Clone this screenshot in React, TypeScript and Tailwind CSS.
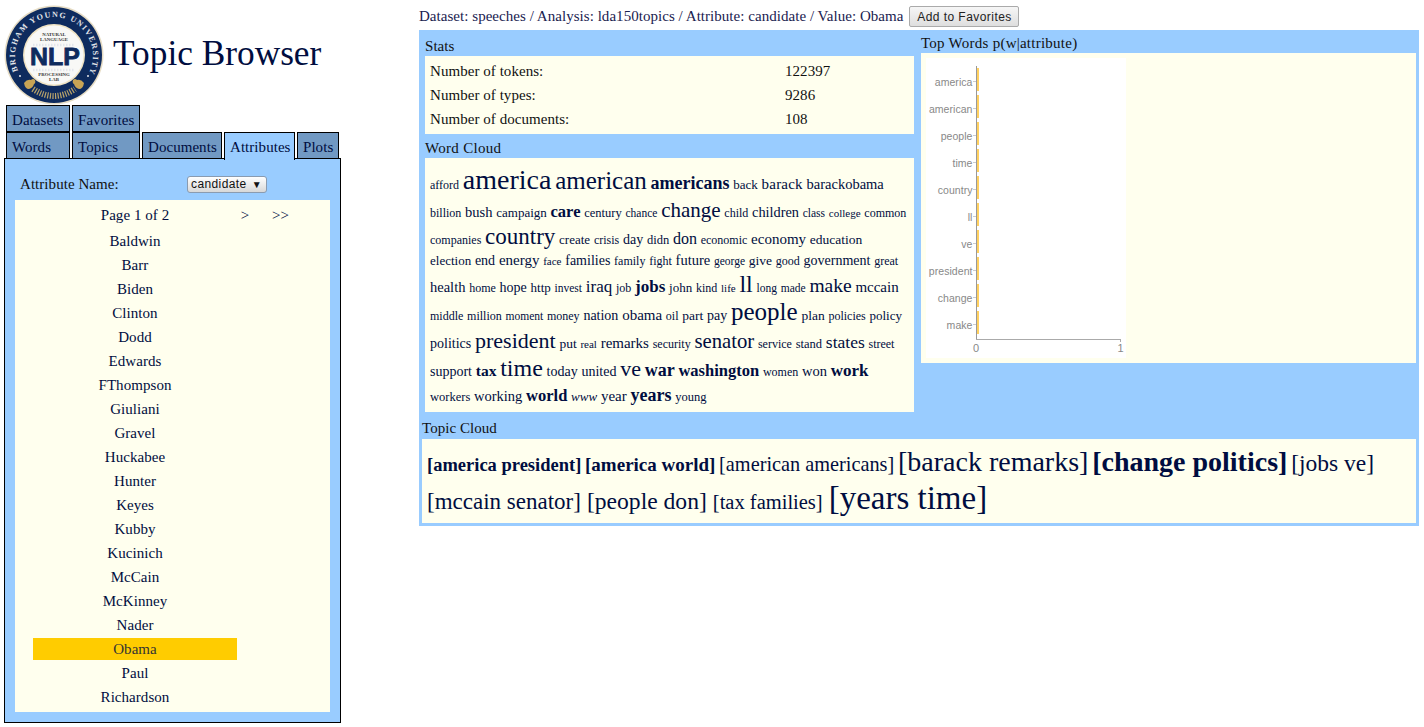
import React from "react";

type Item = [string, string];
const CLOUD: { h: string; words: Item[] }[] = [
  { h: "h-[30px]", words: [["afford","text-[12px]"],["america","text-[28px]"],["american","text-[25px]"],["americans","text-[18px] font-bold"],["back","text-[13px]"],["barack","text-[15px] tracking-[0.2px]"],["barackobama","text-[14.5px]"]] },
  { h: "h-[27px]", words: [["billion","text-[12px]"],["bush","text-[14.5px]"],["campaign","text-[13px]"],["care","text-[16.5px] font-bold"],["century","text-[12.5px]"],["chance","text-[11.5px]"],["change","text-[21px]"],["child","text-[12px]"],["children","text-[14.3px]"],["class","text-[11.5px]"],["college","text-[11px]"],["common","text-[12px]"]] },
  { h: "h-[23px]", words: [["companies","text-[12px]"],["country","text-[23px]"],["create","text-[13px]"],["crisis","text-[12px]"],["day","text-[14px]"],["didn","text-[12.5px]"],["don","text-[16px]"],["economic","text-[12px]"],["economy","text-[15px]"],["education","text-[13.5px]"]] },
  { h: "h-[24px]", words: [["election","text-[13px]"],["end","text-[14px]"],["energy","text-[15px]"],["face","text-[11px]"],["families","text-[14px]"],["family","text-[12px]"],["fight","text-[12px]"],["future","text-[14.5px]"],["george","text-[11.5px]"],["give","text-[13.5px]"],["good","text-[12px]"],["government","text-[14px]"],["great","text-[12px]"]] },
  { h: "h-[28px]", words: [["health","text-[14.5px]"],["home","text-[12px]"],["hope","text-[14px]"],["http","text-[13px]"],["invest","text-[11.5px]"],["iraq","text-[17px]"],["job","text-[12px]"],["jobs","text-[17px] font-bold"],["john","text-[13px]"],["kind","text-[12px]"],["life","text-[11px]"],["ll","text-[24px]"],["long","text-[11.5px]"],["made","text-[11.5px]"],["make","text-[19.5px]"],["mccain","text-[15px]"]] },
  { h: "h-[29px]", words: [["middle","text-[12px]"],["million","text-[12px]"],["moment","text-[11.5px]"],["money","text-[12px]"],["nation","text-[14px]"],["obama","text-[15px]"],["oil","text-[12px]"],["part","text-[13.5px]"],["pay","text-[14px]"],["people","text-[25px]"],["plan","text-[13.5px]"],["policies","text-[12px]"],["policy","text-[13px]"]] },
  { h: "h-[27px]", words: [["politics","text-[14px]"],["president","text-[22px]"],["put","text-[13.5px]"],["real","text-[11px]"],["remarks","text-[15px]"],["security","text-[12px]"],["senator","text-[20.7px]"],["service","text-[12px]"],["stand","text-[12.5px]"],["states","text-[17.5px]"],["street","text-[12px]"]] },
  { h: "h-[27px]", words: [["support","text-[14px]"],["tax","text-[15.5px] font-bold"],["time","text-[24px]"],["today","text-[14px]"],["united","text-[14px]"],["ve","text-[22px]"],["war","text-[18px] font-bold"],["washington","text-[16.5px] font-bold"],["women","text-[12px]"],["won","text-[14.5px]"],["work","text-[17px] font-bold"]] },
  { h: "h-[22px]", words: [["workers","text-[12.5px]"],["working","text-[14.5px]"],["world","text-[16.5px] font-bold"],["www","text-[13px] italic"],["year","text-[15px]"],["years","text-[18px] font-bold"],["young","text-[12.5px]"]] },
];
const TOPICS: { h: string; words: Item[] }[] = [
  { h: "h-[36px]", words: [["[america president]","text-[18.5px] font-bold"],["[america world]","text-[19px] font-bold"],["[american americans]","text-[20.3px]"],["[barack remarks]","text-[28px]"],["[change politics]","text-[28px] font-bold"],["[jobs ve]","text-[23.5px]"]] },
  { h: "h-[38px] text-[24px]", words: [["[mccain senator]","text-[23px]"],["[people don]","text-[23.6px]"],["[tax families]","text-[20.5px]"],["[years time]","text-[33px]"]] },
];
const names = ["Baldwin","Barr","Biden","Clinton","Dodd","Edwards","FThompson","Giuliani","Gravel","Huckabee","Hunter","Keyes","Kubby","Kucinich","McCain","McKinney","Nader","Obama","Paul","Richardson"];
const chart = ["america","american","people","time","country","ll","ve","president","change","make"];

function Tab({ label, w, active }: { label: string; w: string; active?: boolean }) {
  return (
    <div className={`${w} ${active ? "bg-[#99ccff] h-[28px] border-b-0 relative z-10" : "bg-[#7199c3] h-[27px]"} border border-black leading-[29px] pl-[5px]`}>
      {label}
    </div>
  );
}

function Lines({ lines }: { lines: { h: string; words: Item[] }[] }) {
  return (
    <>
      {lines.map((l, i) => (
        <div key={i} className={`${l.h} whitespace-nowrap`}>
          {l.words.map(([t, c]) => (
            <React.Fragment key={t}>
              <span className={c}>{t}</span>{" "}
            </React.Fragment>
          ))}
        </div>
      ))}
    </>
  );
}

function Logo() {
  const serif = "'Liberation Serif', serif";
  return (
    <svg width="102" height="100" viewBox="0 0 102 100" className="shrink-0">
      <circle cx="51" cy="50" r="49.5" fill="#e6dcc4" />
      <circle cx="51" cy="50" r="48" fill="#0e2b5e" />
      <circle cx="51" cy="50" r="31" fill="#efe3c4" />
      <circle cx="51" cy="50" r="29.5" fill="#f8f8f6" />
      <defs><path id="arc" d="M 15 66 A 39 39 0 1 1 87 66" /></defs>
      <text fontFamily={serif} fontSize="8" fontWeight="700" fill="#e4e6ea">
        <textPath href="#arc" textLength="155" lengthAdjust="spacing">BRIGHAM YOUNG UNIVERSITY</textPath>
      </text>
      <circle cx="17" cy="71" r="1" fill="#e4e6ea" />
      <circle cx="85" cy="71" r="1" fill="#e4e6ea" />
      <g stroke="#e3e6ec" strokeWidth="2.5" strokeDasharray="1.5 1.5" fill="none">
        <path d="M30 40 H72" />
        <path d="M30 65 H72" />
      </g>
      <text x="51" y="31" textAnchor="middle" fontFamily={serif} fontSize="4.8" fontWeight="700" fill="#333">NATURAL</text>
      <text x="51" y="36" textAnchor="middle" fontFamily={serif} fontSize="4.8" fontWeight="700" fill="#333">LANGUAGE</text>
      <text x="52" y="60" textAnchor="middle" fontFamily="'Liberation Sans', sans-serif" fontSize="24" fontWeight="700" fill="#0e2b5e" stroke="#0e2b5e" strokeWidth="0.8" textLength="50" lengthAdjust="spacingAndGlyphs">NLP</text>
      <text x="51" y="71" textAnchor="middle" fontFamily={serif} fontSize="4.8" fontWeight="700" fill="#333">PROCESSING</text>
      <text x="51" y="76" textAnchor="middle" fontFamily={serif} fontSize="4.8" fontWeight="700" fill="#333">LAB</text>
      <path d="M21 78 q3 -4 7 -3 q2 -2 4 0 q1 3 -1 4 q-1 4 -5 5 q-4 0 -5 -6z" fill="#c8a455" />
      <path d="M81 78 q-3 -4 -7 -3 q-2 -2 -4 0 q-1 3 1 4 q1 4 5 5 q4 0 5 -6z" fill="#c8a455" />
      <path d="M30 84 q21 14 42 0" fill="none" stroke="#b9a36a" strokeWidth="6" strokeDasharray="1.2 1.4" />
    </svg>
  );
}

function Chart() {
  const sans = "'Liberation Sans', sans-serif";
  return (
    <svg width="200" height="300" viewBox="0 0 200 300" className="bg-white block">
      <line x1="50.5" y1="8" x2="50.5" y2="281" stroke="#999" />
      <line x1="50" y1="281.5" x2="195" y2="281.5" stroke="#aaa" />
      <line x1="194.5" y1="281" x2="194.5" y2="284" stroke="#aaa" />
      {chart.map((c, i) => (
        <g key={c}>
          <rect x="51" y={10 + i * 27} width="2" height="23" fill="#ffd060" />
          <line x1="47" x2="50" y1={23.5 + i * 27} y2={23.5 + i * 27} stroke="#ccc" />
          <text x="46.5" y={28 + i * 27} textAnchor="end" fontFamily={sans} fontSize="10.5" fill="#888">{c}</text>
        </g>
      ))}
      <text x="50" y="294" textAnchor="middle" fontFamily={sans} fontSize="11" fill="#888">0</text>
      <text x="194.5" y="294" textAnchor="middle" fontFamily={sans} fontSize="11" fill="#888">1</text>
    </svg>
  );
}

export default function App() {
  return (
    <div className="flex w-[1424px] h-[727px] overflow-hidden bg-white text-[#000d40] font-['Liberation_Serif',serif] text-[15px] tracking-[0.05px]">
      <div className="w-[419px] shrink-0 pl-[4px]">
        <div className="flex items-start h-[105px]">
          <div className="-ml-[1px] mt-[5px]"><Logo /></div>
          <div className="text-[35.3px] tracking-normal ml-[8px] mt-[31px] leading-[46px]">Topic Browser</div>
        </div>
        <div className="flex gap-[2px] pl-[2px]">
          <Tab label="Datasets" w="w-[64px]" />
          <Tab label="Favorites" w="w-[68px]" />
        </div>
        <div className="flex gap-[2px] pl-[2px]">
          <Tab label="Words" w="w-[64px]" />
          <Tab label="Topics" w="w-[68px]" />
          <Tab label="Documents" w="w-[80px]" />
          <Tab label="Attributes" w="w-[71px]" active />
          <Tab label="Plots" w="w-[42px]" />
        </div>
        <div className="w-[337px] h-[565px] -mt-[2px] border border-black bg-[#99ccff] px-[10px] pt-[16px]">
          <div className="flex items-center h-[19px] mb-[6px] pl-[5px]">
            <span className="w-[167px] text-[#111]">Attribute Name:</span>
            <div className="w-[80px] h-[17px] rounded-[3px] border border-[#8a9bb0] bg-gradient-to-b from-white to-[#d8d8d8] font-['Liberation_Sans',sans-serif] text-[12px] leading-[15px] text-[#111] pl-[3px] tracking-[0.4px] flex justify-between pr-[4px]">
              <span>candidate</span><span className="text-[10px]">▼</span>
            </div>
          </div>
          <div className="w-[315px] h-[512px] bg-[#ffffee]">
            <div className="flex h-[30px] items-center">
              <span className="w-[240px] text-center">Page 1 of 2</span>
              <span className="w-[20px] text-center -ml-[20px]">&gt;</span>
              <span className="ml-[17px]">&gt;&gt;</span>
            </div>
            {names.map((n) => (
              <div key={n} className="ml-[18px] w-[204px] h-[24px]">
                <div className={`h-[22px] text-center leading-[22px] ${n === "Obama" ? "bg-[#ffcc00] text-[#333]" : ""}`}>{n}</div>
              </div>
            ))}
          </div>
        </div>
      </div>
      <div className="w-[1000px] shrink-0">
        <div className="flex items-center h-[30px] pt-[2px] text-[#1a2250]">
          <span className="tracking-[0.04px]">Dataset: speeches / Analysis: lda150topics / Attribute: candidate / Value: Obama</span>
          <div className="ml-[6px] w-[110px] h-[21px] rounded-[2px] border border-[#aaa] bg-gradient-to-b from-[#f6f6f6] to-[#dedede] font-['Liberation_Sans',sans-serif] text-[12px] leading-[20px] text-center text-[#222] tracking-[0.45px]">Add to Favorites</div>
        </div>
        <div className="h-[496px] bg-[#99ccff] flex flex-col">
          <div className="flex h-[382px]">
            <div className="w-[489px] ml-[6px]">
              <div className="h-[26px] pt-[8px] leading-[16px] text-[#111]">Stats</div>
              <div className="h-[78px] bg-[#ffffee] pl-[5px] text-[#111] pt-[3px]">
                {[["Number of tokens:","122397"],["Number of types:","9286"],["Number of documents:","108"]].map(([a,b]) => (
                  <div key={a} className="flex h-[24px] leading-[24px]"><span className="w-[355px]">{a}</span><span>{b}</span></div>
                ))}
              </div>
              <div className="h-[24px] pt-[5px] leading-[18px] text-[#111] tracking-[0.3px]">Word Cloud</div>
              <div className="h-[254px] bg-[#ffffee] px-[5px] pt-[12px] leading-[20px] tracking-normal">
                <Lines lines={CLOUD} />
              </div>
            </div>
            <div className="w-[495px] ml-[7px]">
              <div className="h-[23px] text-[#111] leading-[26px] tracking-[0.25px]">Top Words p(w|attribute)</div>
              <div className="h-[310px] bg-[#ffffee] px-[5px] pt-[5px]"><Chart /></div>
            </div>
          </div>
          <div className="h-[27px] ml-[3px] pt-[7px] leading-[18px] text-[#111]">Topic Cloud</div>
          <div className="h-[84px] mx-[3px] bg-[#ffffee] px-[5px] pt-[13px] leading-[20px] tracking-normal">
            <Lines lines={TOPICS} />
          </div>
        </div>
      </div>
    </div>
  );
}
